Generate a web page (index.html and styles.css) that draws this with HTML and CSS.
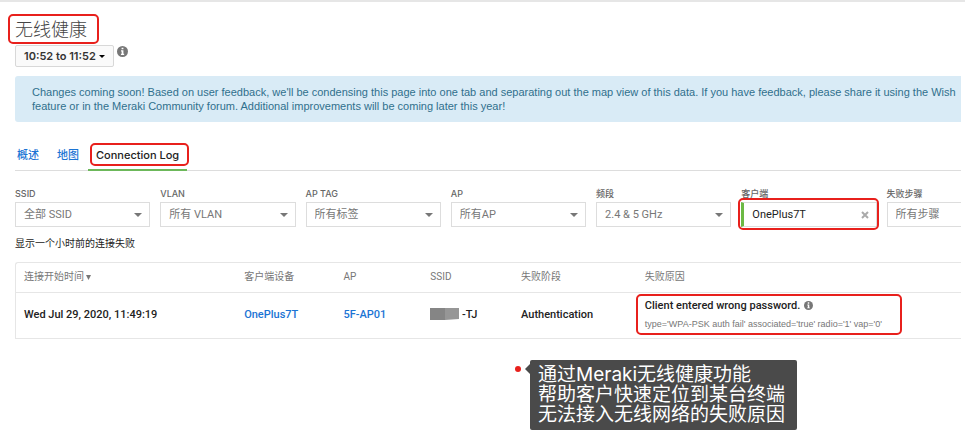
FILE: index.html
```html
<!DOCTYPE html>
<html lang="zh-CN">
<head>
<meta charset="utf-8">
<meta name="viewport" content="width=device-width, initial-scale=1">
<title>无线健康</title>
<link rel="stylesheet" href="styles.css">
</head>
<body>
<svg class="defs" aria-hidden="true">
  <symbol id="info" viewBox="0 0 12 12">
    <circle cx="6" cy="6" r="6"/>
    <path fill="#fff" d="M5 1.800h2v1.800H5zM4.400 4.600H7v3.900h.8v1.300H4.300V8.500h.8V5.900h-.7z"/>
  </symbol>
  <symbol id="caret" viewBox="0 0 8 4"><path d="M0 0h8L4 4z"/></symbol>
</svg>
<main class="page">
  <header class="head">
    <h1 class="title marked">无线健康</h1>
    <div class="range">
      <button class="range-btn" type="button">10:52 to 11:52 <svg class="range-caret"><use href="#caret"/></svg></button>
      <svg class="info"><use href="#info"/></svg>
    </div>
  </header>

  <p class="notice">Changes coming soon! Based on user feedback, we'll be condensing this page into one tab and separating out the map view of this data. If you have feedback, please share it using the Wish feature or in the Meraki Community forum. Additional improvements will be coming later this year!</p>

  <nav class="tabs">
    <a class="tab" href="#overview">概述</a>
    <a class="tab" href="#map">地图</a>
    <a class="tab active marked" href="#log">Connection Log</a>
  </nav>

  <form class="filters">
    <div class="field">
      <label for="ssid">SSID</label>
      <div class="control"><select id="ssid"><option>全部 SSID</option></select><svg class="caret"><use href="#caret"/></svg></div>
    </div>
    <div class="field">
      <label for="vlan">VLAN</label>
      <div class="control"><select id="vlan"><option>所有 VLAN</option></select><svg class="caret"><use href="#caret"/></svg></div>
    </div>
    <div class="field">
      <label for="tag">AP TAG</label>
      <div class="control"><select id="tag"><option>所有标签</option></select><svg class="caret"><use href="#caret"/></svg></div>
    </div>
    <div class="field">
      <label for="ap">AP</label>
      <div class="control"><select id="ap"><option>所有AP</option></select><svg class="caret"><use href="#caret"/></svg></div>
    </div>
    <div class="field">
      <label for="band">频段</label>
      <div class="control"><select id="band"><option>2.4 &amp; 5 GHz</option></select><svg class="caret"><use href="#caret"/></svg></div>
    </div>
    <div class="field">
      <label for="client">客户端</label>
      <div class="control chosen marked">
        <input id="client" type="text" value="OnePlus7T">
        <button class="clear" type="button" aria-label="清除"><svg viewBox="0 0 8 8"><path d="M1 1l6 6M7 1L1 7"/></svg></button>
      </div>
    </div>
    <div class="field">
      <label for="step">失败步骤</label>
      <div class="control"><select id="step"><option>所有步骤</option></select></div>
    </div>
  </form>

  <p class="summary">显示一个小时前的连接失败</p>

  <div class="panel">
    <table class="log">
      <colgroup><col class="c-time"><col class="c-client"><col class="c-ap"><col class="c-ssid"><col class="c-stage"><col></colgroup>
      <thead>
        <tr><th>连接开始时间 <svg class="sort" viewBox="0 0 5 5"><path d="M0 0h5L2.500 5z"/></svg></th><th>客户端设备</th><th>AP</th><th>SSID</th><th>失败阶段</th><th>失败原因</th></tr>
      </thead>
      <tbody>
        <tr>
          <td>Wed Jul 29, 2020, 11:49:19</td>
          <td><a href="#client">OnePlus7T</a></td>
          <td><a href="#ap">5F-AP01</a></td>
          <td><svg class="redacted" viewBox="0 0 29 12"><path fill="#858585" d="M0 0h15v12H0z"/><path fill="#969696" d="M15 0h14v11l-14 1z"/></svg> -TJ</td>
          <td>Authentication</td>
          <td>
            <div class="reason marked">
              <div>Client entered wrong password. <svg class="info small"><use href="#info"/></svg></div>
              <div class="detail">type='WPA-PSK auth fail' associated='true' radio='1' vap='0'</div>
            </div>
          </td>
        </tr>
      </tbody>
    </table>
  </div>

  <aside class="callout">
    <span class="dot"></span>
    <p class="bubble">通过Meraki无线健康功能<br>帮助客户快速定位到某台终端<br>无法接入无线网络的失败原因</p>
  </aside>
</main>
</body>
</html>
```
FILE: styles.css
```css
* { box-sizing: border-box; }

body {
  margin: 0;
  background: #fff;
  color: #222;
  font: 11px/14px Roboto, "Noto Sans CJK SC", sans-serif;
}

h1, p { margin: 0; }
a { color: #1b74d4; text-decoration: none; }
.defs { position: absolute; width: 0; height: 0; }

.page {
  border-top: 2px solid #e6e6e6;
  padding: 0 4px 0 15px;
  overflow: hidden;
}

/* red highlight frames */
.marked { position: relative; }
.marked::after {
  content: "";
  position: absolute;
  inset: -5px -3px -4px -6px;
  border: 2px solid #e8201c;
  border-radius: 5px;
  pointer-events: none;
}

.head { padding-top: 16px; }
.title {
  width: max-content;
  font-size: 18px;
  line-height: 24px;
  font-weight: 300;
  color: #444;
}
.title.marked::after { inset: -4px -12px -2px -7px; }

.range { display: flex; gap: 3px; margin-top: 3px; }
.range-btn {
  display: flex;
  align-items: center;
  gap: 3px;
  height: 22px;
  padding: 0 8px;
  border: 1px solid #d8d8d8;
  border-radius: 2px;
  background: #fafafa;
  color: #333;
  font: 600 11px/14px Inter, sans-serif;
}
.range-caret { width: 6px; height: 3px; }
.info { width: 11px; height: 11px; margin-top: 1px; fill: #777; }
.info.small { width: 9px; height: 9px; margin-left: 1px; vertical-align: -1px; }

.notice {
  margin-top: 9px;
  padding: 9px 0 9px 17px;
  border-radius: 3px 0 0 3px;
  background: #d9ebf6;
  color: #30708d;
  font-family: "Liberation Sans", sans-serif;
}

.tabs {
  display: flex;
  gap: 8px;
  margin-top: 21px;
  border-bottom: 1px solid #ddd;
}
.tab {
  padding: 5px 1px 7px 2px;
  margin-right: 7px;
  line-height: 14px;
  font-family: Inter, "Noto Sans CJK SC", sans-serif;
  font-weight: 500;
}
.tab.active {
  margin: 0 0 -1px -7px;
  padding: 5px 8px 7px;
  border-bottom: 2px solid #6cb85a;
  color: #222;
}
.tab.active::after { inset: 0 -2px 3px 2px; }

.filters { display: flex; gap: 10px; margin-top: 16px; overflow-x: clip; }
.field { flex: 0 0 14.3%; min-width: 0; }
.field label {
  display: block;
  margin-bottom: 2px;
  font: 500 9px/13px Inter, "Noto Sans CJK SC", sans-serif;
  color: #666;
}
.control {
  display: flex;
  align-items: center;
  height: 25px;
  padding-right: 7px;
  border: 1px solid #ddd;
}
.control select,
.control input {
  flex: 1;
  min-width: 0;
  height: 23px;
  padding: 0 0 0 8px;
  border: 0;
  appearance: none;
  background: none;
  color: #777;
  font: 11px/14px Roboto, "Noto Sans CJK SC", sans-serif;
}
.caret { width: 8px; height: 4px; fill: #777; }
.control.chosen { border-left: 3px solid #6cb944; }
.control.chosen input { color: #222; }
.clear { display: flex; padding: 0; border: 0; background: none; }
.clear svg { width: 8px; height: 8px; fill: none; stroke: #aaa; stroke-width: 2; }

.summary { margin-top: 10px; font-size: 10px; }

.panel { margin-top: 11px; border: 1px solid #e6e6e6; border-right: 0; border-radius: 3px 0 0 0; }
.log { width: 100%; border-collapse: collapse; table-layout: fixed; }
.log th, .log td { padding: 0 0 0 8px; text-align: left; white-space: nowrap; }
.log th { height: 29px; font-weight: 400; font-size: 10px; color: #777; }
.log td { height: 46px; border-top: 1px solid #e6e6e6; font-weight: 500; }
.c-time { width: 23.3%; }
.c-client { width: 10.5%; }
.c-ap { width: 9.2%; }
.c-ssid { width: 9.6%; }
.c-stage { width: 13.1%; }
.sort { width: 5px; height: 5px; fill: #777; }
.redacted { width: 29px; height: 12px; vertical-align: -2px; }
.reason { width: max-content; }
.reason.marked::after { inset: -5px -20px -4px -9px; }
.detail {
  margin-top: 5px;
  font: 400 9px/13px "Liberation Sans", sans-serif;
  color: #777;
}

.callout { display: flex; align-items: flex-start; gap: 9px; margin: 21px 0 0 500px; }
.dot { width: 6px; height: 6px; margin-top: 6px; border-radius: 50%; background: #e8201c; }
.bubble {
  position: relative;
  padding: 5px 12px 5px 8px;
  border-radius: 2px;
  background: #4a4a4a;
  color: #fff;
  font-family: Inter, "Noto Sans CJK SC", sans-serif;
  font-size: 19px;
  line-height: 20px;
  white-space: nowrap;
}
.bubble::before {
  content: "";
  position: absolute;
  left: -5px;
  top: 4px;
  border: 5px solid transparent;
  border-right-color: #4a4a4a;
  border-left: 0;
}
```
